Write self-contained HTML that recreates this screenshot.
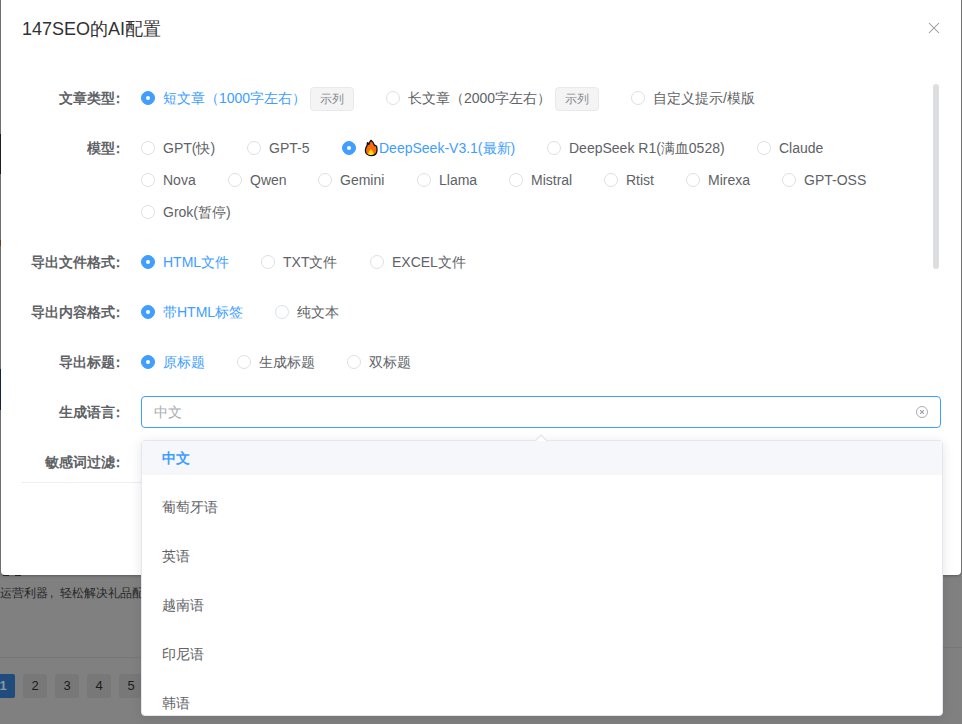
<!DOCTYPE html>
<html><head><meta charset="utf-8">
<style>
*{box-sizing:border-box;margin:0;padding:0}
html,body{width:962px;height:724px;overflow:hidden}
body{position:relative;background:#808080;font-family:"Liberation Sans",sans-serif;font-size:14px;color:#606266}
.abs{position:absolute}
.pgtxt{left:0;top:585px;font-size:12px;line-height:16px;color:#262626;white-space:nowrap}
.pgline{left:0;top:657px;width:150px;height:1px;background:#777}
.pgline2{left:930px;top:647px;width:40px;height:1px;background:#777}
.pbtn{top:674px;width:24px;height:24px;background:#787878;border-radius:2px;color:#1c1c1c;font-size:13px;line-height:24px;text-align:center}
.dialog{left:1px;top:-10px;width:960px;height:585px;background:#fff;border-radius:4px;box-shadow:0 1px 3px rgba(0,0,0,.3)}
.title{left:22px;top:17px;font-size:18px;line-height:24px;color:#303133;white-space:nowrap}
.close{left:928px;top:22px;width:12px;height:12px}
.c{position:relative;left:-4px}
.label{left:21px;width:108px;text-align:right;font-weight:bold;line-height:32px;white-space:nowrap}
.row{left:141px;height:32px;line-height:32px;white-space:nowrap}
.r{position:absolute;top:0;height:32px;white-space:nowrap}
.r i{position:absolute;left:0;top:9px;width:14px;height:14px;border:1px solid #dcdfe6;border-radius:50%;background:#fff}
.r.on i{border-color:#409eff;background:#409eff}
.r.on i:after{content:"";position:absolute;left:4px;top:4px;width:4px;height:4px;border-radius:50%;background:#fff}
.r span{position:absolute;left:22px;top:0;line-height:32px;color:#606266}
.r.on span{color:#409eff}
.tag{position:absolute;top:5px;width:44px;height:24px;border:1px solid #e9e9eb;background:#f4f4f5;border-radius:4px;color:#878a90;font-size:12px;line-height:22px;text-align:center}
.scroll{left:933px;top:84px;width:6px;height:185px;border-radius:3px;background:#dddee0}
.input{left:141px;top:396px;width:800px;height:32px;border:1px solid #409eff;border-radius:4px;background:#fff}
.ph{position:absolute;left:12px;top:0;line-height:30px;color:#a8abb2}
.sep{left:21px;top:482px;width:920px;height:1px;background:#ebeef5}
.dd{left:141px;top:440px;width:802px;height:276px;border:1px solid #e4e7ed;border-radius:4px;background:#fff;box-shadow:0 2px 12px 0 rgba(0,0,0,.1)}
.arrow{left:535px;top:434px;width:0;height:0;border-left:6px solid transparent;border-right:6px solid transparent;border-bottom:6px solid #e4e7ed}
.arrow2{left:536px;top:436px;width:0;height:0;border-left:5px solid transparent;border-right:5px solid transparent;border-bottom:5px solid #fff}
.opt{position:absolute;left:0;width:800px;height:34px;line-height:34px;padding-left:20px;color:#606266;white-space:nowrap}
.opt.sel{background:#f5f7fa;color:#409eff;font-weight:bold}
</style></head><body>
<!-- page behind overlay -->
<div class="abs pgtxt">运营利器<span style="display:inline-block;width:12px;padding-left:2px">,</span>轻松解决礼品配送难题</div>
<div class="abs pgline"></div>
<div class="abs pgline2"></div>
<div class="abs" style="left:0;top:0;width:1px;height:580px;background:#7c7c7c"></div>
<div class="abs" style="left:0;top:134px;width:1px;height:40px;background:#202020"></div>
<div class="abs" style="left:0;top:240px;width:1px;height:6px;background:#6a4a30"></div>
<div class="abs" style="left:0;top:369px;width:1px;height:41px;background:#202840"></div>
<div class="abs" style="left:3px;top:575px;width:6px;height:1px;background:#2a2a2a"></div>
<div class="abs" style="left:15px;top:575px;width:6px;height:1px;background:#2a2a2a"></div>
<div class="abs pbtn" style="left:-9px;background:#1f4b7d;color:#8a98a4;font-weight:bold">1</div>
<div class="abs pbtn" style="left:23px">2</div>
<div class="abs pbtn" style="left:55px">3</div>
<div class="abs pbtn" style="left:87px">4</div>
<div class="abs pbtn" style="left:119px">5</div>

<div class="abs dialog"></div>
<div class="abs title">147SEO的AI配置</div>
<svg class="abs close" viewBox="0 0 12 12"><path d="M1 1L11 11M11 1L1 11" stroke="#909399" stroke-width="1.05"/></svg>

<div class="abs label" style="top:82px">文章类型<span class="c">：</span></div>
<div class="abs row" style="top:82px">
 <div class="r on" style="left:0"><i></i><span>短文章（1000字左右）</span></div>
 <div class="tag" style="left:169px">示列</div>
 <div class="r" style="left:245px"><i></i><span>长文章（2000字左右）</span></div>
 <div class="tag" style="left:414px">示列</div>
 <div class="r" style="left:490px"><i></i><span>自定义提示/模版</span></div>
</div>

<div class="abs label" style="top:132px">模型<span class="c">：</span></div>
<div class="abs row" style="top:132px">
 <div class="r" style="left:0"><i></i><span>GPT(快)</span></div>
 <div class="r" style="left:106px"><i></i><span>GPT-5</span></div>
 <div class="r on" style="left:201px"><i></i><svg style="position:absolute;left:22px;top:7px" width="14" height="18" viewBox="0 0 14 18"><path d="M7 16.6C3.6 16.6 1.4 14.4 1.4 11.4C1.4 9 2.6 7.6 3.2 6.4C3.3 5.4 3 4.3 3.6 3.6C4.4 4.2 4.6 5 4.8 5.6C5.3 4 6 2.2 7 1.3C8.6 2.6 10 4.2 10.6 6.6C11.2 6.2 11.8 6.6 12.6 7.4C13 8.8 13.1 10.2 13 11.6C12.8 14.6 10.4 16.6 7 16.6Z" fill="#f76a10" stroke="#111" stroke-width="1.3" stroke-linejoin="round"/><path d="M4.2 15.2C4.2 13 5.6 11.6 6.8 10C8 11.6 9.8 13 9.8 15.2C8.6 16 5.4 16 4.2 15.2Z" fill="#ffd800"/><path d="M6 15.6C6.2 14.8 6.5 14.4 6.8 14C7.1 14.4 7.4 14.8 7.6 15.6Z" fill="#fff"/></svg><span style="left:37px">DeepSeek-V3.1(最新)</span></div>
 <div class="r" style="left:406px"><i></i><span>DeepSeek R1(满血0528)</span></div>
 <div class="r" style="left:616px"><i></i><span>Claude</span></div>
</div>
<div class="abs row" style="top:164px">
 <div class="r" style="left:0"><i></i><span>Nova</span></div>
 <div class="r" style="left:87px"><i></i><span>Qwen</span></div>
 <div class="r" style="left:177px"><i></i><span>Gemini</span></div>
 <div class="r" style="left:276px"><i></i><span>Llama</span></div>
 <div class="r" style="left:368px"><i></i><span>Mistral</span></div>
 <div class="r" style="left:463px"><i></i><span>Rtist</span></div>
 <div class="r" style="left:545px"><i></i><span>Mirexa</span></div>
 <div class="r" style="left:641px"><i></i><span>GPT-OSS</span></div>
</div>
<div class="abs row" style="top:196px">
 <div class="r" style="left:0"><i></i><span>Grok(暂停)</span></div>
</div>

<div class="abs label" style="top:246px">导出文件格式<span class="c">：</span></div>
<div class="abs row" style="top:246px">
 <div class="r on" style="left:0"><i></i><span>HTML文件</span></div>
 <div class="r" style="left:120px"><i></i><span>TXT文件</span></div>
 <div class="r" style="left:229px"><i></i><span>EXCEL文件</span></div>
</div>

<div class="abs label" style="top:296px">导出内容格式<span class="c">：</span></div>
<div class="abs row" style="top:296px">
 <div class="r on" style="left:0"><i></i><span>带HTML标签</span></div>
 <div class="r" style="left:134px"><i></i><span>纯文本</span></div>
</div>

<div class="abs label" style="top:346px">导出标题<span class="c">：</span></div>
<div class="abs row" style="top:346px">
 <div class="r on" style="left:0"><i></i><span>原标题</span></div>
 <div class="r" style="left:96px"><i></i><span>生成标题</span></div>
 <div class="r" style="left:206px"><i></i><span>双标题</span></div>
</div>

<div class="abs label" style="top:396px">生成语言<span class="c">：</span></div>
<div class="abs input"><span class="ph">中文</span><svg style="position:absolute;left:774px;top:9px" width="13" height="13" viewBox="0 0 13 13"><circle cx="6" cy="6" r="5.5" fill="none" stroke="#a8abb2" stroke-width="1"/><path d="M4.1 4.1L7.9 7.9M7.9 4.1L4.1 7.9" stroke="#9a9da4" stroke-width="1.1"/></svg></div>

<div class="abs label" style="top:446px">敏感词过滤<span class="c">：</span></div>
<div class="abs sep"></div>
<div class="abs scroll"></div>

<div class="abs dd">
 <div class="opt sel" style="top:0">中文</div>
 <div class="opt" style="top:49px">葡萄牙语</div>
 <div class="opt" style="top:98px">英语</div>
 <div class="opt" style="top:147px">越南语</div>
 <div class="opt" style="top:196px">印尼语</div>
 <div class="opt" style="top:245px">韩语</div>
</div>
<div class="abs arrow"></div>
<div class="abs arrow2"></div>
</body></html>
